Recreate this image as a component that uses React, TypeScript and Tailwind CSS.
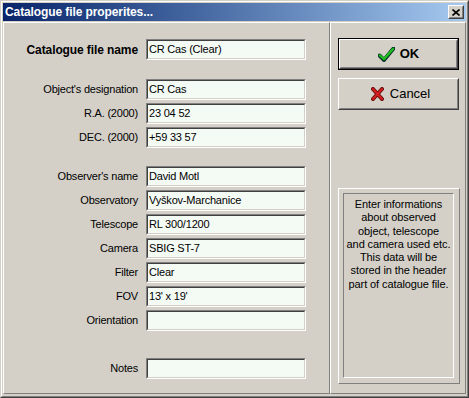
import React from 'react';

const font = { fontFamily: '"Liberation Sans", Arial, sans-serif' };

const Field: React.FC<{ value?: string }> = ({ value }) => (
  <div className="w-[160px] h-[21px] border border-t-[#808080] border-l-[#808080] border-b-white border-r-white">
    <div className="h-full border border-t-[#404040] border-l-[#404040] border-b-[#d4d0c8] border-r-[#d4d0c8] bg-[#f4faf4] pl-px text-[11px] leading-[17px] tracking-[-0.2px] text-black whitespace-nowrap overflow-hidden">
      {value}
    </div>
  </div>
);

const Row: React.FC<{ label: string; value?: string; bold?: boolean; className?: string }> = ({ label, value, bold, className }) => (
  <div className={`flex items-center h-[21px] ${className ?? ''}`}>
    <div className={`w-[134px] text-right text-black whitespace-nowrap ${bold ? 'font-bold text-[12px] tracking-[-0.1px]' : 'text-[11px] tracking-[-0.2px]'}`}>
      {label}
    </div>
    <div className="ml-[8px]">
      <Field value={value} />
    </div>
  </div>
);

const CheckIcon = () => (
  <svg width="17" height="15" viewBox="0 0 17 15">
    <path d="M1.5 8.5 L6 13 L15.5 1.5" fill="none" stroke="#0b3d2b" strokeWidth="4" strokeLinecap="round" strokeLinejoin="round" />
    <path d="M2 8.5 L6 12 L15 2" fill="none" stroke="#1fc21f" strokeWidth="2.2" strokeLinecap="round" strokeLinejoin="round" />
  </svg>
);

const CrossIcon = () => (
  <svg width="13" height="14" viewBox="0 0 13 14">
    <path d="M2 2 L11 12 M11 2 L2 12" fill="none" stroke="#6b0a0a" strokeWidth="4" strokeLinecap="round" />
    <path d="M2 2 L11 12 M11 2 L2 12" fill="none" stroke="#d42020" strokeWidth="2" strokeLinecap="round" />
  </svg>
);

export default function App() {
  return (
    <div style={font} className="w-[469px] h-[398px] border border-t-[#d4d0c8] border-l-[#d4d0c8] border-b-[#404040] border-r-[#404040] select-none">
      <div className="h-full border border-t-white border-l-white border-b-[#808080] border-r-[#808080] bg-[#d4d0c8] p-px flex flex-col">
        {/* title bar */}
        <div className="h-[18px] flex items-center justify-between bg-linear-to-r from-[#0a246a] to-[#a6caf0] pl-[2px] pr-[2px]">
          <span className="text-white font-bold text-[12px] tracking-[-0.1px] leading-none">Catalogue file properites...</span>
          <div className="w-[16px] h-[14px] border border-t-white border-l-white border-b-[#404040] border-r-[#404040]">
            <div className="h-full border border-t-[#d4d0c8] border-l-[#d4d0c8] border-b-[#808080] border-r-[#808080] bg-[#d4d0c8] flex items-center justify-center">
              <svg width="8" height="7" viewBox="0 0 8 7">
                <path d="M0.5 0.5 L7.5 6.5 M7.5 0.5 L0.5 6.5" stroke="black" strokeWidth="1.6" />
              </svg>
            </div>
          </div>
        </div>

        <div className="mt-px flex h-[372px]">
          {/* left panel */}
          <div className="w-[327px] h-full border border-t-white border-l-white border-b-[#808080] border-r-[#808080] pt-[16px] flex flex-col">
            <Row label="Catalogue file name" value="CR Cas (Clear)" bold />
            <Row className="mt-[19px]" label="Object's designation" value="CR Cas" />
            <Row className="mt-[3px]" label="R.A. (2000)" value="23 04 52" />
            <Row className="mt-[3px]" label="DEC. (2000)" value="+59 33 57" />
            <Row className="mt-[18px]" label="Observer's name" value="David Motl" />
            <Row className="mt-[3px]" label="Observatory" value="Vyškov-Marchanice" />
            <Row className="mt-[3px]" label="Telescope" value="RL 300/1200" />
            <Row className="mt-[3px]" label="Camera" value="SBIG ST-7" />
            <Row className="mt-[3px]" label="Filter" value="Clear" />
            <Row className="mt-[3px]" label="FOV" value="13' x 19'" />
            <Row className="mt-[3px]" label="Orientation" />
            <Row className="mt-[27px]" label="Notes" />
          </div>

          {/* right panel */}
          <div className="w-[136px] h-full border border-t-white border-l-white border-b-[#808080] border-r-[#808080] pt-[15px] pl-[7px] flex flex-col">
            <div className="w-[121px] h-[32px] border border-black">
              <div className="h-full border border-t-white border-l-white border-b-[#404040] border-r-[#404040]">
                <div className="h-full border border-t-[#d4d0c8] border-l-[#d4d0c8] border-b-[#808080] border-r-[#808080] flex items-center justify-center gap-[5px]">
                  <CheckIcon />
                  <span className="font-bold text-[13px] text-black">OK</span>
                </div>
              </div>
            </div>
            <div className="mt-[8px] w-[121px] h-[32px] border border-t-white border-l-white border-b-[#404040] border-r-[#404040]">
              <div className="h-full border border-t-[#d4d0c8] border-l-[#d4d0c8] border-b-[#808080] border-r-[#808080] flex items-center justify-center gap-[6px] pl-[4px]">
                <CrossIcon />
                <span className="text-[13px] text-black">Cancel</span>
              </div>
            </div>

            {/* info box */}
            <div className="mt-[78px] w-[122px] h-[196px] border border-t-white border-l-white border-b-[#808080] border-r-[#808080] pt-[4px] pl-[4px]">
              <div className="w-[111px] h-[185px] border border-t-[#808080] border-l-[#808080] border-b-white border-r-white pt-[4px] text-center text-[11px] leading-[13.3px] tracking-[-0.1px] text-black">
                Enter informations<br />
                about observed<br />
                object, telescope<br />
                and camera used etc.<br />
                This data will be<br />
                stored in the header<br />
                part of catalogue file.
              </div>
            </div>
          </div>
        </div>
      </div>
    </div>
  );
}
